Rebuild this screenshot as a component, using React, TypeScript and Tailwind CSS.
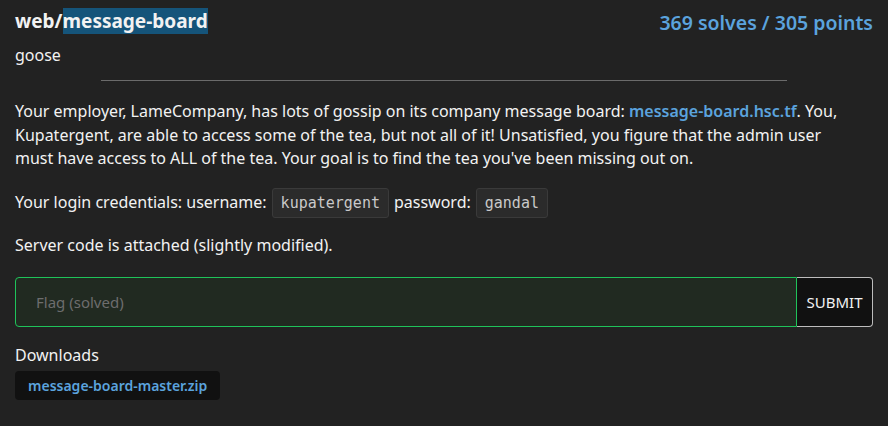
export default function App() {
  return (
    <div className="min-h-screen bg-[#222222] px-[15px] pt-[3px] pb-6 text-[#f2f2f2] font-['Noto_Sans',sans-serif]">
      {/* header */}
      <div className="flex items-start justify-between">
        <div>
          <h1 className="text-[19px] font-bold leading-[36px]">
            web/<span className="bg-[#15547a]">message-board</span>
          </h1>
          <div className="text-[16px] leading-[24px] mt-[4px]">goose</div>
        </div>
        <div className="text-[19.5px] font-semibold leading-[36px] text-[#5ba3dd] mt-[2px]">
          369 solves / 305 points
        </div>
      </div>

      <hr className="mx-auto mt-[13px] w-[80%] border-0 border-t border-[#6b6b6b]" />

      <div className="text-[16px] leading-[23.5px]">
        <p className="mt-[19px]">
          Your employer, LameCompany, has lots of gossip on its company message board:{' '}
          <a className="font-semibold text-[#5ba3dd]">message-board.hsc.tf</a>. You,
          <br />
          Kupatergent, are able to access some of the tea, but not all of it! Unsatisfied, you figure that the admin user
          <br />
          must have access to ALL of the tea. Your goal is to find the tea you've been missing out on.
        </p>
        <p className="mt-[17px] flex items-center gap-[5px]">
          <span>Your login credentials: username:</span>
          <code className="rounded-[3px] border border-[#3a3a3a] bg-[#2b2b2b] px-[8px] py-[2px] text-[15px] leading-[24px] text-[#c9c9c9] font-['DejaVu_Sans_Mono',monospace]">
            kupatergent
          </code>
          <span>password:</span>
          <code className="rounded-[3px] border border-[#3a3a3a] bg-[#2b2b2b] px-[8px] py-[2px] text-[15px] leading-[24px] text-[#c9c9c9] font-['DejaVu_Sans_Mono',monospace]">
            gandal
          </code>
        </p>
        <p className="mt-[16px]">Server code is attached (slightly modified).</p>
      </div>

      {/* flag form */}
      <div className="mt-[20px] flex h-[50px]">
        <input
          disabled
          placeholder="Flag (solved)"
          className="flex-1 rounded-l-[4px] border border-[#1fc35a] bg-[#212a21] px-[20px] text-[15px] text-[#6d6d6d] placeholder:text-[#6d6d6d] outline-none"
        />
        <button className="w-[76px] rounded-r-[4px] border border-l-0 border-[#bdbdbd] bg-[#111111] text-[15px] text-[#f2f2f2]">
          SUBMIT
        </button>
      </div>

      <div className="mt-[16px] text-[16px] leading-[24px]">Downloads</div>
      <a className="mt-[4px] inline-block rounded-[4px] bg-[#111111] px-[13px] py-[3px] text-[14px] font-semibold leading-[23px] text-[#5ba3dd]">
        message-board-master.zip
      </a>
    </div>
  );
}
